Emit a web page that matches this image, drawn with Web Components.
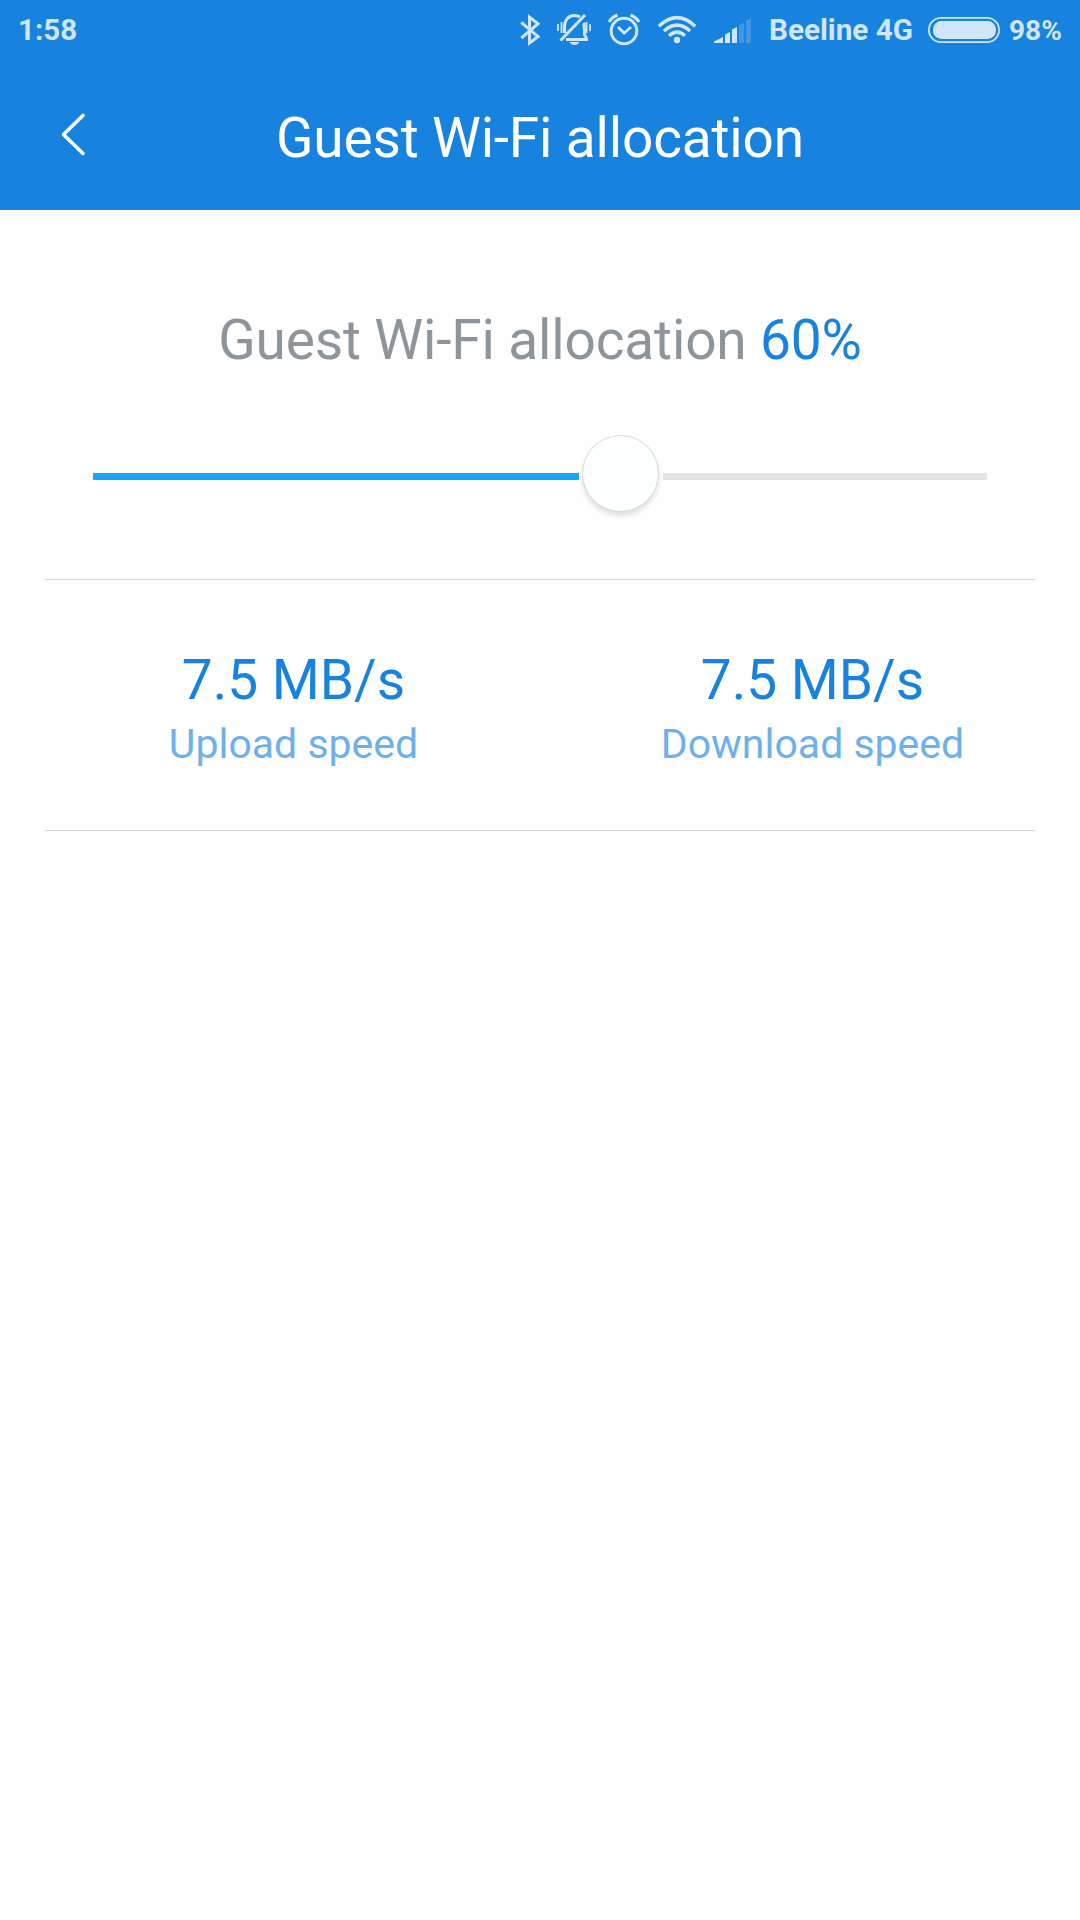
<!DOCTYPE html>
<html lang="en">
<head>
<meta charset="utf-8">
<title>Guest Wi-Fi allocation</title>
<style>
html, body { margin: 0; background: #fefefe; }
body { font-family: Roboto, sans-serif; width: 1080px; height: 1920px; overflow: hidden; }
</style>
</head>
<body>
<wifi-screen></wifi-screen>
<script>
const define = (name, html, setup) => customElements.define(name, class extends HTMLElement {
  connectedCallback() {
    if (this.shadowRoot) return;
    const t = document.createElement('template');
    t.innerHTML = html;
    this.attachShadow({ mode: 'open' }).append(t.content.cloneNode(true));
    if (setup) setup(this, this.shadowRoot);
  }
});

define('status-bar', `
<style>
:host { display: flex; align-items: center; height: 60px; padding: 0 19px 0 18px; box-sizing: border-box; color: #d1e6f9; font-weight: 700; font-size: 29.500px; line-height: 60px; white-space: nowrap; }
svg { display: block; flex: none; }
.time { flex: 1; }
.carrier { width: 146px; font-size: 29.700px; }
.pct { width: 52px; font-size: 28px; margin-top: 2px; }
</style>
<span class="time">1:58</span>
<svg width="251" height="60" viewBox="518 0 251 60" fill="none" stroke="currentColor" stroke-width="3">
  <path d="M521.3 22.3L538 36.6L529.5 43V17L538 23.8L521.3 38" stroke-linejoin="miter"/>
  <path d="M564.5 33V27C564.5 20 568.500 15.500 574 15.500C576.500 15.500 578.500 16 580 17"/>
  <path d="M560.500 40.500L585 15"/>
  <path d="M583.500 23C584.500 25 584.500 27 584.500 34C584.500 36 586.500 36.500 586.500 39.500H566"/>
  <path d="M569.500 42H579.500C578.500 44 577 45 574.500 45C572 45 570.500 44 569.500 42Z" fill="currentColor" stroke="none"/>
  <path d="M558 24V31M561.500 22V33M586.500 22V33M590 24V31" stroke-width="1.800"/>
  <circle cx="624" cy="31" r="12.800"/>
  <path d="M618 27L624.200 33L631 27" stroke-width="2.800"/>
  <path d="M609 22Q611.500 17.500 617.500 15M630.500 15Q636.500 17.500 639 22"/>
  <path d="M658.800 26.300Q677 9 695.200 26.300M664 31Q677 19.200 690 31M669 35.700Q677 28.500 685 35.700" stroke-width="3.400"/>
  <circle cx="677" cy="40" r="3.200" fill="currentColor" stroke="none"/>
  <g fill="currentColor" stroke="none">
    <path d="M714 43V41.500L723 37V43ZM725 43V34.500L730 32V43ZM732 43V29.500L737 27V43Z"/>
    <path opacity=".22" d="M739 43V25L744 22.500V43ZM746 43V20.500L751 18V43Z"/>
  </g>
</svg>
<span class="carrier">Beeline 4G</span>
<svg width="94" height="60" viewBox="915 0 94 60"><rect x="928.900" y="17.900" width="70.200" height="24.200" rx="12.100" fill="none" stroke="currentColor" stroke-width="1.800"/><rect x="933" y="21" width="63" height="18" rx="8.500" fill="currentColor"/></svg>
<span class="pct">98%</span>`);

define('nav-bar', `
<style>
:host { display: grid; grid-template-columns: 150px 1fr 150px; height: 150px; color: #fff; font-size: 55px; letter-spacing: -.17px; }
svg { display: block; }
h1 { margin: 0; font: inherit; line-height: 156px; text-align: center; white-space: nowrap; }
</style>
<svg width="150" height="150" viewBox="0 60 150 150" fill="none" stroke="currentColor" stroke-width="3.600" stroke-linecap="round" stroke-linejoin="round"><path d="M83 115.500L63.500 134.500L83 153.500"/></svg>
<h1><slot></slot></h1>`);

define('allocation-slider', `
<style>
:host { display: grid; grid-template-columns: 486px 84px 324px; align-items: center; height: 84px; margin: 0 93px; }
.on, .off { height: 7px; margin-top: 7px; background: #18a6fb; }
.off { background: #e4e4e4; }
.thumb { width: 77px; height: 77px; margin-right: 1px; box-sizing: border-box; border: 1px solid #d7d9d9; border-radius: 50%; justify-self: center; background: #fdfefe; box-shadow: 0 4px 5px rgba(0,0,0,.12); }
</style>
<div class="on"></div><div class="thumb"></div><div class="off"></div>`);

define('speed-stat', `
<style>
:host { display: flex; flex-direction: column; align-items: center; white-space: nowrap; color: #1882df; }
.value { font-size: 55px; line-height: 64px; }
.label { font-size: 41px; line-height: 64px; color: #6eb0eb; }
</style>
<span class="value"><slot></slot></span><span class="label"></span>`,
(el, root) => root.querySelector('.label').textContent = el.getAttribute('label'));

define('speed-row', `
<style>
:host { display: grid; grid-template-columns: 497px 445px; column-gap: 48px; height: 252px; box-sizing: border-box; margin: 0 45px; padding-top: 68px; border: solid #d5d5d5; border-width: 1px 0; }
</style><slot></slot>`);

define('wifi-screen', `
<style>
:host { display: flex; flex-direction: column; height: 1920px; }
header { background: #1882df; height: 210px; }
.summary { margin: 0; padding-top: 98px; height: 123px; text-align: center; font-size: 55px; line-height: 64px; letter-spacing: -.15px; color: #8d959b; white-space: nowrap; }
.summary b { font-weight: 400; color: #1882df; }
speed-row { margin-top: 64px; }
</style>
<header><status-bar></status-bar><nav-bar>Guest Wi-Fi allocation</nav-bar></header>
<p class="summary">Guest Wi-Fi allocation <b>60%</b></p>
<allocation-slider></allocation-slider>
<speed-row>
  <speed-stat label="Upload speed">7.5 MB/s</speed-stat>
  <speed-stat label="Download speed">7.5 MB/s</speed-stat>
</speed-row>`);
</script>
</body>
</html>
